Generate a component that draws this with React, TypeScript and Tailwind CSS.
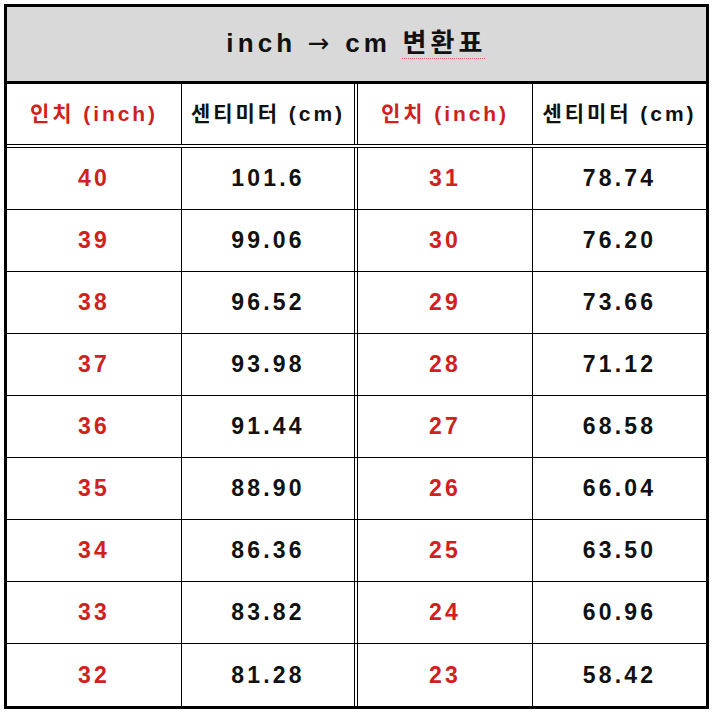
import React from "react";

const rows: [string, string, string, string][] = [
  ["40", "101.6", "31", "78.74"],
  ["39", "99.06", "30", "76.20"],
  ["38", "96.52", "29", "73.66"],
  ["37", "93.98", "28", "71.12"],
  ["36", "91.44", "27", "68.58"],
  ["35", "88.90", "26", "66.04"],
  ["34", "86.36", "25", "63.50"],
  ["33", "83.82", "24", "60.96"],
  ["32", "81.28", "23", "58.42"],
];

const font = {
  fontFamily: '"Liberation Sans", "Noto Sans CJK KR", sans-serif',
};

function Cols({
  cells,
  height,
  last,
  head,
}: {
  cells: string[];
  height: string;
  last?: boolean;
  head?: boolean;
}) {
  const txt = head ? "text-[21px] tracking-[0.14em]" : "text-[23px] tracking-[0.14em]";
  return (
    <div className={`flex ${height} ${last ? "" : head ? "border-b-[4px] border-double border-black" : "border-b border-black"}`}>
      <div className={`flex w-[175px] items-center justify-center border-r border-black font-bold text-[#d02020] ${txt}`}>
        {cells[0]}
      </div>
      <div className={`flex w-[176px] items-center justify-center border-r-[4px] border-double border-black font-bold text-[#111] ${txt}`}>
        {cells[1]}
      </div>
      <div className={`flex w-[175px] items-center justify-center border-r border-black font-bold text-[#d02020] ${txt}`}>
        {cells[2]}
      </div>
      <div className={`flex w-[173px] items-center justify-center font-bold text-[#111] ${txt}`}>
        {cells[3]}
      </div>
    </div>
  );
}

export default function App() {
  return (
    <div className="h-[713px] w-[713px] bg-white pl-[4px] pt-[4px]" style={font}>
      <div className="flex h-[705px] w-[705px] flex-col border-[3px] border-black">
        {/* Title band */}
        <div className="flex h-[77px] items-center justify-center border-b-[3px] border-black bg-[#d9d9d9] pb-[2px]">
          <span className="text-[26px] font-bold tracking-[0.16em] text-[#111]">
            inch{" "}
            <span className="font-normal" style={{ fontFamily: '"DejaVu Sans", sans-serif' }}>
              →
            </span>{" "}
            cm{" "}
            <span className="underline decoration-[#d07050] decoration-dotted decoration-1 underline-offset-[6px]">
              변환표
            </span>
          </span>
        </div>

        <Cols
          head
          height="h-[64px]"
          cells={["인치 (inch)", "센티미터 (cm)", "인치 (inch)", "센티미터 (cm)"]}
        />

        {rows.map((r, i) => (
          <Cols key={r[0]} height="h-[62px]" cells={r} last={i === rows.length - 1} />
        ))}
      </div>
    </div>
  );
}
